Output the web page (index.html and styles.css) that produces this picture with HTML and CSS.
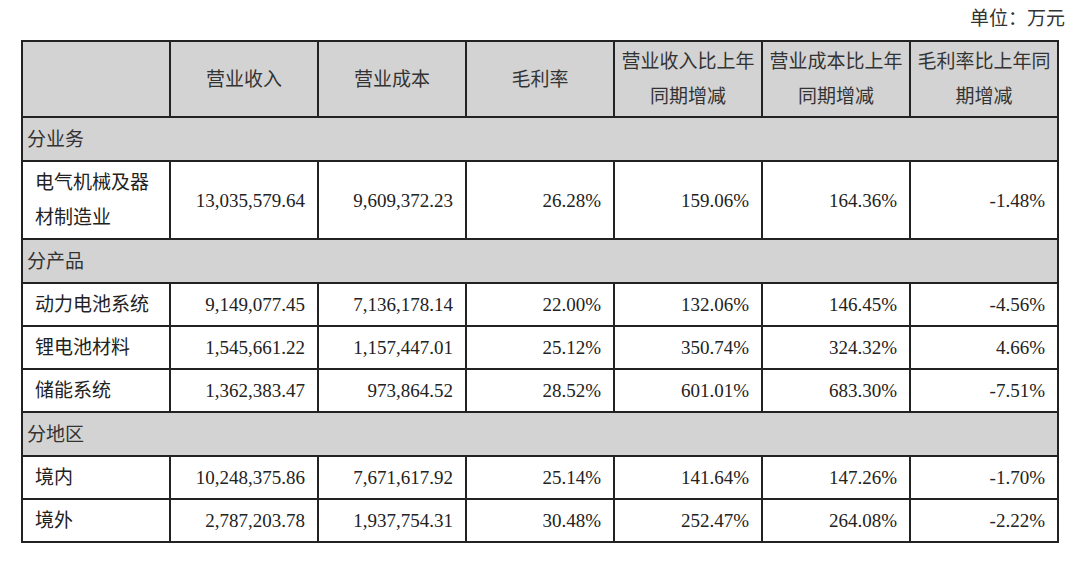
FILE: index.html
```html
<!DOCTYPE html>
<html lang="zh-CN">
<head>
<meta charset="utf-8">
<link rel="stylesheet" href="styles.css">
</head>
<body>
<div class="page">
  <div class="unit">单位：万元</div>
  <table class="fin">
    <colgroup>
      <col><col><col><col><col><col><col>
    </colgroup>
    <thead>
      <tr class="head">
        <th></th>
        <th>营业收入</th>
        <th>营业成本</th>
        <th>毛利率</th>
        <th>营业收入比上年同期增减</th>
        <th>营业成本比上年同期增减</th>
        <th>毛利率比上年同期增减</th>
      </tr>
    </thead>
    <tbody>
      <tr class="section"><td colspan="7">分业务</td></tr>
      <tr class="tall">
        <td class="name">电气机械及器材制造业</td>
        <td class="num">13,035,579.64</td>
        <td class="num">9,609,372.23</td>
        <td class="num">26.28%</td>
        <td class="num">159.06%</td>
        <td class="num">164.36%</td>
        <td class="num">-1.48%</td>
      </tr>
      <tr class="section"><td colspan="7">分产品</td></tr>
      <tr>
        <td class="name">动力电池系统</td>
        <td class="num">9,149,077.45</td>
        <td class="num">7,136,178.14</td>
        <td class="num">22.00%</td>
        <td class="num">132.06%</td>
        <td class="num">146.45%</td>
        <td class="num">-4.56%</td>
      </tr>
      <tr>
        <td class="name">锂电池材料</td>
        <td class="num">1,545,661.22</td>
        <td class="num">1,157,447.01</td>
        <td class="num">25.12%</td>
        <td class="num">350.74%</td>
        <td class="num">324.32%</td>
        <td class="num">4.66%</td>
      </tr>
      <tr>
        <td class="name">储能系统</td>
        <td class="num">1,362,383.47</td>
        <td class="num">973,864.52</td>
        <td class="num">28.52%</td>
        <td class="num">601.01%</td>
        <td class="num">683.30%</td>
        <td class="num">-7.51%</td>
      </tr>
      <tr class="section"><td colspan="7">分地区</td></tr>
      <tr>
        <td class="name">境内</td>
        <td class="num">10,248,375.86</td>
        <td class="num">7,671,617.92</td>
        <td class="num">25.14%</td>
        <td class="num">141.64%</td>
        <td class="num">147.26%</td>
        <td class="num">-1.70%</td>
      </tr>
      <tr>
        <td class="name">境外</td>
        <td class="num">2,787,203.78</td>
        <td class="num">1,937,754.31</td>
        <td class="num">30.48%</td>
        <td class="num">252.47%</td>
        <td class="num">264.08%</td>
        <td class="num">-2.22%</td>
      </tr>
    </tbody>
  </table>
</div>
</body>
</html>
```
FILE: styles.css
```css
html, body {
  margin: 0;
  padding: 0;
  background: #fff;
}
body {
  font-family: "Liberation Serif", "Noto Sans CJK SC", serif;
  font-size: 19px;
  color: #222;
}
.page {
  padding: 4px 0 0 21px;
  width: 1038px;
}
.unit {
  text-align: right;
  line-height: 30px;
  height: 36px;
  margin-right: -6px;
  color: #333;
}
.fin {
  border-collapse: collapse;
  table-layout: fixed;
  width: 1038px;
}
.fin col {
  width: 148px;
}
.fin th,
.fin td {
  border: 2px solid #222;
  line-height: 35px;
  padding: 3px 12px 3px 12px;
  vertical-align: middle;
  font-weight: normal;
}
.fin th {
  background: #d3d3d3;
  text-align: center;
  padding: 2px 4px;
  color: #333;
}
.head th {
  height: 75px;
  box-sizing: border-box;
}
.section td {
  background: #d3d3d3;
  padding: 4px 4px 3px 4px;
  color: #333;
}
.fin td.name {
  padding-left: 12px;
  padding-right: 10px;
}
.fin td.num {
  text-align: right;
}
.tall td {
  padding-top: 3px;
  padding-bottom: 3px;
}
```
